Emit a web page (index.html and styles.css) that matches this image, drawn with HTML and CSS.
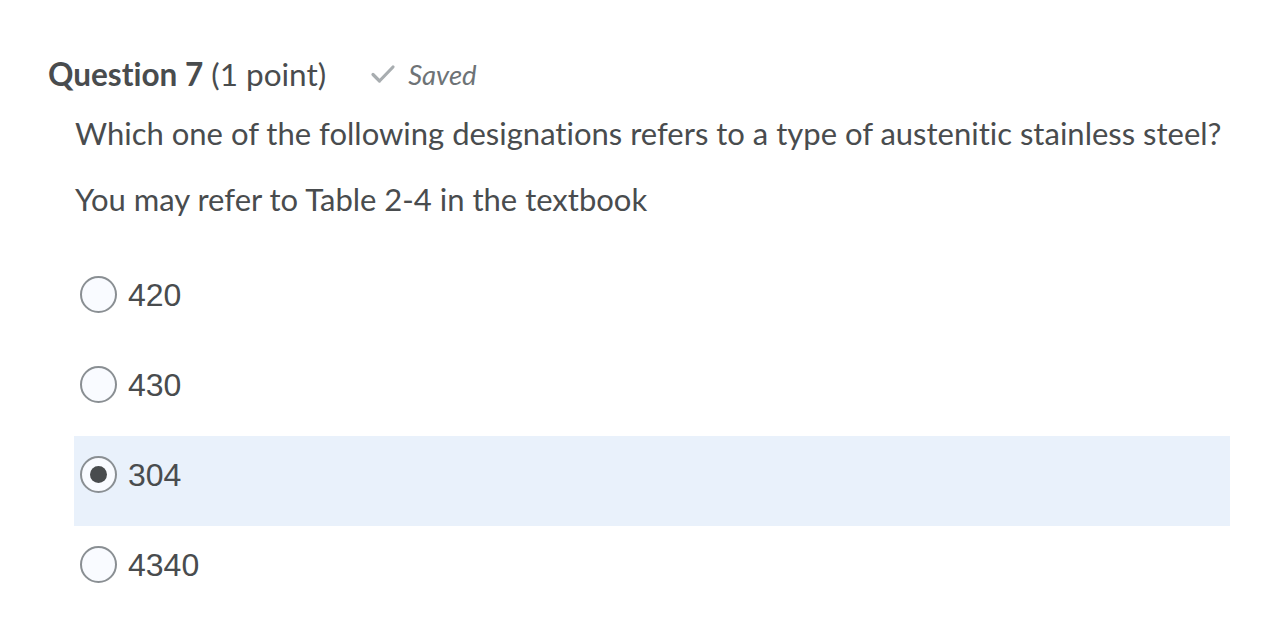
FILE: index.html
```html
<!DOCTYPE html>
<html>
<head>
<meta charset="utf-8">
<link rel="stylesheet" href="styles.css">
</head>
<body>
<div class="question">
  <div class="q-header">
    <h2 class="q-title"><strong>Question 7</strong> (1 point)</h2>
    <span class="saved">
      <svg class="check" width="26" height="20" viewBox="0 0 26 20"><path d="M3 10.5 L9.5 17 L23 3" fill="none" stroke="#a8adb0" stroke-width="3.2" stroke-linecap="round" stroke-linejoin="round"/></svg>
      <em>Saved</em>
    </span>
  </div>
  <div class="q-body">
    <p class="q-text">Which one of the following designations refers to a type of austenitic stainless steel?</p>
    <p class="q-text">You may refer to Table 2-4 in the textbook</p>
    <div class="options">
      <label class="option"><span class="radio"></span><span class="opt-label">420</span></label>
      <label class="option"><span class="radio"></span><span class="opt-label">430</span></label>
      <label class="option selected"><span class="radio checked"></span><span class="opt-label">304</span></label>
      <label class="option"><span class="radio"></span><span class="opt-label">4340</span></label>
    </div>
  </div>
</div>
</body>
</html>
```
FILE: styles.css
```css
html, body {
  margin: 0;
  padding: 0;
  background: #ffffff;
}
body {
  font-family: Lato, "Noto Sans", sans-serif;
  color: #494c4e;
  font-variant-ligatures: none;
  font-feature-settings: "liga" 0, "clig" 0, "dlig" 0, "calt" 0;
}
.question {
  padding: 55px 0 0 48px;
  width: 1182px;
}
.q-header {
  display: flex;
  align-items: center;
  gap: 44px;
  height: 38px;
}
.q-title {
  margin: 0;
  font-size: 31.5px;
  font-weight: 400;
  line-height: 38px;
}
.q-title strong {
  font-weight: 700;
}
.saved {
  display: flex;
  align-items: center;
  gap: 12px;
  color: #6e7376;
  font-size: 27.5px;
}
.saved em {
  font-style: italic;
}
.q-body {
  padding-left: 27px;
}
.q-text {
  margin: 0;
  font-size: 31px;
  line-height: 36px;
}
.q-text:first-child {
  margin-top: 22px;
}
.q-text + .q-text {
  margin-top: 30px;
}
.options {
  margin-top: 39px;
  margin-left: -1px;
  display: flex;
  flex-direction: column;
}
.option {
  display: flex;
  align-items: flex-start;
  gap: 11px;
  height: 90px;
  box-sizing: border-box;
  padding: 20px 0 0 6px;
}
.option.selected {
  background: #e9f1fb;
}
.radio {
  box-sizing: border-box;
  flex: none;
  width: 37px;
  height: 37px;
  border-radius: 50%;
  border: 2px solid #8a8f93;
  background: #f9fbff;
  display: flex;
  align-items: center;
  justify-content: center;
}
.radio.checked::after {
  content: "";
  width: 17px;
  height: 17px;
  border-radius: 50%;
  background: #494c4e;
}
.opt-label {
  font-family: "Liberation Sans", Arial, sans-serif;
  font-size: 32px;
  line-height: 38px;
  color: #494c4e;
}
```
